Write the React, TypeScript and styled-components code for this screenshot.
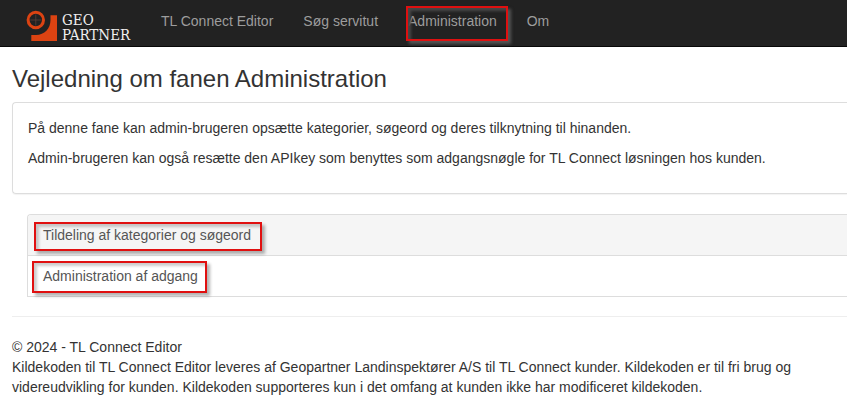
import React from "react";
import styled, { createGlobalStyle, css } from "styled-components";

const GlobalStyle = createGlobalStyle`
  *, *::before, *::after { box-sizing: border-box; }
  body {
    margin: 0;
    background: #fff;
    color: #333;
    font-family: "Liberation Sans", Arial, sans-serif;
    font-size: 14px;
    line-height: 20px;
  }
`;

const Navbar = styled.header`
  display: flex;
  align-items: flex-start;
  height: 47px;
  padding-left: 26px;
  background: #222;
  border-bottom: 1px solid #080808;
`;

const Brand = styled.a`
  display: flex;
  width: 120px;
  padding-top: 10px;
  gap: 4px;
  color: #f0f0f0;
  text-decoration: none;
`;

const BrandName = styled.span`
  display: flex;
  flex-direction: column;
  padding-top: 3px;
  font-family: "DejaVu Serif Condensed", "DejaVu Serif", serif;
  font-size: 15px;
  line-height: 15px;
`;

const NavList = styled.ul`
  display: flex;
  margin: 0;
  padding: 0;
  list-style: none;
`;

const NavLink = styled.a`
  display: block;
  padding: 11px 15px;
  font-size: 14px;
  color: #9d9d9d;
  text-decoration: none;
  white-space: nowrap;
`;

const Marked = styled.span<{ $area: "nav" | "wide" | "tall" }>`
  position: relative;
  display: inline-block;

  &::after {
    content: "";
    position: absolute;
    pointer-events: none;
    border: 2px solid #e01010;
    ${({ $area }) =>
      $area === "nav"
        ? css`
            inset: -5px -11px -10px -2px;
            box-shadow: 3px 3px 3px #555, inset 3px 3px 3px #484848;
          `
        : css`
            inset: ${$area === "wide" ? "-3px -11px -6px -9px" : "-5px -9px -7px -11px"};
            box-shadow: 3px 3px 3px rgba(0, 0, 0, 0.3),
              inset 3px 3px 3px rgba(0, 0, 0, 0.2);
          `}
  }
`;

const Page = styled.main`
  padding-left: 12px;
`;

const Title = styled.h3`
  margin: 0;
  padding: 19px 0 10px;
  font-size: 24px;
  font-weight: 400;
  line-height: 26px;
`;

const Panel = styled.section`
  padding: 15px;
  border: 1px solid #ddd;
  border-right: 0;
  border-radius: 4px 0 0 4px;
  box-shadow: 0 1px 1px rgba(0, 0, 0, 0.05);
`;

const Paragraph = styled.p`
  margin: 0 0 10px;
`;

const Accordion = styled.div`
  margin: 20px 0 19px 15px;
  border: 1px solid #ddd;
  border-right: 0;
  border-radius: 4px 0 0 0;
`;

const AccordionButton = styled.button<{ $active?: boolean }>`
  display: block;
  width: 100%;
  padding: 10px 15px;
  border: 0;
  border-radius: 3px 0 0 0;
  background: ${({ $active }) => ($active ? "#f5f5f5" : "#fff")};
  color: #555;
  font: inherit;
  text-align: left;
  cursor: pointer;

  & + & {
    border-top: 1px solid #ddd;
    border-radius: 0;
  }
`;

const Rule = styled.hr`
  margin: 0 0 20px;
  border: 0;
  border-top: 1px solid #eee;
`;

const Footer = styled.footer`
  padding: 0 12px 10px 0;
`;

const FooterLine = styled.div``;

function LogoMark() {
  return (
    <svg width="32" height="32" viewBox="0 0 32 32" aria-hidden="true">
      <path d="M24.500 5.300H31V31H5.300V25H10C18.500 25 24.500 18.500 24.500 10Z" fill="#dc4312" />
      <circle cx="9.800" cy="10" r="7.700" fill="#222" stroke="#dc4312" strokeWidth="3" />
      <path d="M9.800 4.500V15.500M4.300 10H15.300" stroke="#5c4038" strokeWidth="0.800" />
    </svg>
  );
}

export default function App() {
  return (
    <>
      <GlobalStyle />
      <Navbar>
        <Brand href="#" aria-label="Geo Partner">
          <LogoMark />
          <BrandName>
            <span>GEO</span>
            <span>PARTNER</span>
          </BrandName>
        </Brand>
        <nav>
          <NavList>
            <li><NavLink href="#editor">TL Connect Editor</NavLink></li>
            <li><NavLink href="#servitut">Søg servitut</NavLink></li>
            <li>
              <NavLink href="#administration" aria-current="page">
                <Marked $area="nav">Administration</Marked>
              </NavLink>
            </li>
            <li><NavLink href="#om">Om</NavLink></li>
          </NavList>
        </nav>
      </Navbar>
      <Page>
        <Title>Vejledning om fanen Administration</Title>
        <Panel>
          <Paragraph>
            På denne fane kan admin-brugeren opsætte kategorier, søgeord og deres tilknytning til
            hinanden.
          </Paragraph>
          <Paragraph>
            Admin-brugeren kan også resætte den APIkey som benyttes som adgangsnøgle for TL Connect
            løsningen hos kunden.
          </Paragraph>
        </Panel>
        <Accordion>
          <AccordionButton type="button" $active>
            <Marked $area="wide">Tildeling af kategorier og søgeord</Marked>
          </AccordionButton>
          <AccordionButton type="button">
            <Marked $area="tall">Administration af adgang</Marked>
          </AccordionButton>
        </Accordion>
        <Rule />
        <Footer>
          <FooterLine>© 2024 - TL Connect Editor</FooterLine>
          <FooterLine>
            Kildekoden til TL Connect Editor leveres af Geopartner Landinspektører A/S til TL
            Connect kunder. Kildekoden er til fri brug og videreudvikling for kunden. Kildekoden
            supporteres kun i det omfang at kunden ikke har modificeret kildekoden.
          </FooterLine>
        </Footer>
      </Page>
    </>
  );
}
